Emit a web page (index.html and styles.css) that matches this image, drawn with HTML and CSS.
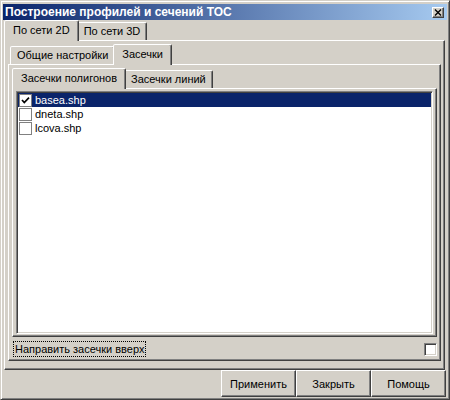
FILE: index.html
```html
<!DOCTYPE html>
<html lang="ru">
<head>
  <meta charset="UTF-8" />
  <meta name="viewport" content="width=device-width, initial-scale=1.0"/>
  <title>Построение профилей и сечений ТОС</title>
  <link rel="stylesheet" href="styles.css">
</head>
<body>
  <div class="window">
    <!-- Заголовок окна -->
    <div class="titlebar">
      <span class="title">Построение профилей и сечений ТОС</span>
      <span class="close-btn">
        <svg width="8" height="7" viewBox="0 0 8 7">
          <path d="M1 0.5 L7 6.5 M7 0.5 L1 6.5" stroke="#000" stroke-width="1.4" fill="none"/>
        </svg>
      </span>
    </div>

    <!-- Вкладки: по сети 2D / 3D -->
    <div class="tabs outer">
      <div class="tab-strip">
        <div class="tab active">По сети 2D</div>
        <div class="tab">По сети 3D</div>
      </div>
      <div class="page">
        <div class="tabs nested">
          <div class="tab-strip">
            <div class="tab">Общие настройки</div>
            <div class="tab active">Засечки</div>
          </div>
          <div class="page">
            <div class="tabs">
              <div class="tab-strip">
                <div class="tab active">Засечки полигонов</div>
                <div class="tab">Засечки линий</div>
              </div>
              <div class="page thin">
                <div class="layer-list">
                  <div class="layer selected">
                    <span class="check checked">
                      <svg width="11" height="11" viewBox="0 0 11 11">
                        <path d="M2 5 L4.3 7.6 L9 2.6" stroke="#000" stroke-width="1.7" fill="none"/>
                      </svg>
                    </span>
                    <span class="layer-name">basea.shp</span>
                  </div>
                  <div class="layer">
                    <span class="check"></span>
                    <span class="layer-name">dneta.shp</span>
                  </div>
                  <div class="layer">
                    <span class="check"></span>
                    <span class="layer-name">lcova.shp</span>
                  </div>
                </div>
              </div>
            </div>
            <div class="option-row">
              <span class="option-label">Направить засечки вверх</span>
              <span class="option-box"></span>
            </div>
          </div>
        </div>
      </div>
    </div>

    <!-- Кнопки -->
    <div class="buttons">
      <div class="btn">Применить</div>
      <div class="btn">Закрыть</div>
      <div class="btn">Помощь</div>
    </div>
  </div>
</body>
</html>
```

FILE: styles.css
```css
body {
  margin: 0;
  background: #d4d0c8;
  font-family: "Liberation Sans", Arial, sans-serif;
  font-size: 11px;
  color: #000;
}

.window {
  width: 450px;
  height: 400px;
  box-sizing: border-box;
  border: 1px solid;
  border-color: #d4d0c8 #404040 #404040 #d4d0c8;
  box-shadow: inset 1px 1px #fff, inset -1px -1px #808080;
  padding: 2px;
  display: flex;
  flex-direction: column;
}

/* Заголовок */
.titlebar {
  margin-top: 1px;
  height: 16px;
  padding: 0 3px 0 2px;
  display: flex;
  align-items: center;
  justify-content: space-between;
  background: linear-gradient(to right, #0a246a, #a6caf0);
}

.title {
  color: #fff;
  font-weight: bold;
  font-size: 12px;
}

.close-btn {
  width: 12px;
  height: 11px;
  box-sizing: border-box;
  border: 1px solid;
  border-color: #fff #404040 #404040 #fff;
  box-shadow: inset -1px -1px #808080;
  background: #d4d0c8;
  display: flex;
  align-items: center;
  justify-content: center;
}

/* Вкладки */
.tabs {
  flex: 1;
  display: flex;
  flex-direction: column;
}

.tabs.outer { margin: 0 2px 0 1px; }
.tabs.nested { margin-bottom: 5px; }

.tab-strip {
  height: 20px;
  padding-left: 2px;
  display: flex;
  align-items: flex-end;
}

.tab {
  height: 18px;
  box-sizing: border-box;
  padding: 0 6px;
  border: 1px solid;
  border-bottom: 0;
  border-color: #fff #404040 transparent #fff;
  border-radius: 2px 2px 0 0;
  box-shadow: inset -1px 0 #808080;
  background: #d4d0c8;
  line-height: 16px;
  white-space: nowrap;
}

.tab.active {
  height: 21px;
  margin: 0 -2px -1px;
  padding: 0 8px;
  line-height: 18px;
  position: relative;
  z-index: 1;
}

.page {
  flex: 1;
  display: flex;
  flex-direction: column;
  border: 1px solid;
  border-color: #fff #404040 #404040 #fff;
  box-shadow: inset -1px -1px #808080;
  padding: 3px;
}

.page.thin { padding: 2px 3px; }

/* Список слоёв */
.layer-list {
  flex: 1;
  background: #fff;
  border: 1px solid;
  border-color: #808080 #fff #fff #808080;
  box-shadow: inset 1px 1px #404040, inset -1px -1px #d4d0c8;
  padding: 1px 1px 0 1px;
}

.layer {
  height: 14px;
  display: flex;
  align-items: center;
}

.layer.selected {
  background: #0a246a;
  color: #fff;
}

.check {
  width: 13px;
  height: 13px;
  box-sizing: border-box;
  margin-left: 1px;
  border: 1px solid #808080;
  background: #fff;
  display: flex;
  align-items: center;
  justify-content: center;
}

.layer-name {
  margin-left: 3px;
}

/* Флажок под списком */
.option-row {
  padding: 4px 0 0 1px;
  display: flex;
  align-items: center;
  justify-content: space-between;
}

.option-label {
  border: 1px dotted #000;
  padding: 0 1px;
  line-height: 14px;
}

.option-box {
  width: 13px;
  height: 13px;
  box-sizing: border-box;
  border: 1px solid;
  border-color: #808080 #fff #fff #808080;
  box-shadow: inset 1px 1px #404040, inset -1px -1px #d4d0c8;
  background: #fff;
}

/* Кнопки */
.buttons {
  height: 27px;
  display: flex;
  justify-content: flex-end;
  padding-right: 1px;
}

.btn {
  width: 75px;
  box-sizing: border-box;
  border: 1px solid;
  border-color: #fff #404040 #404040 #fff;
  box-shadow: inset -1px -1px #808080;
  background: #d4d0c8;
  display: flex;
  align-items: center;
  justify-content: center;
}
```
